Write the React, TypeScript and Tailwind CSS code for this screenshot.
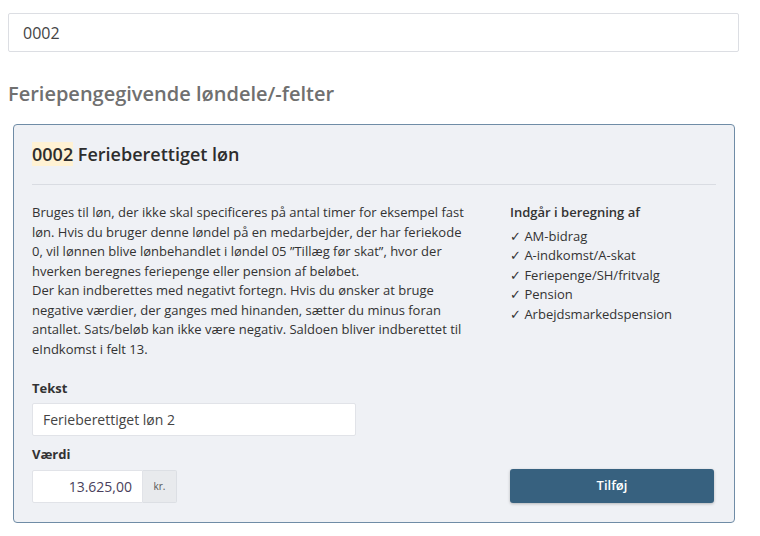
import React from "react"

const checks = [
  "AM-bidrag",
  "A-indkomst/A-skat",
  "Feriepenge/SH/fritvalg",
  "Pension",
  "Arbejdsmarkedspension",
]

export default function App() {
  return (
    <div
      className="h-[536px] w-[760px] bg-white pt-[13px] text-[#333]"
      style={{ fontFamily: '"Open Sans", "Liberation Sans", sans-serif' }}
    >
      <div className="ml-2 flex h-[39px] w-[731px] items-center rounded-[2px] border border-[#dcdee3] px-[14px] text-[16px] text-[#444]">
        0002
      </div>

      <h2 className="ml-2 mt-[28px] text-[20px] font-semibold leading-[28px] text-[#707070]">
        Feriepengegivende løndele/-felter
      </h2>

      <div className="ml-[13px] mt-[16px] h-[399px] w-[722px] rounded-[4px] border border-[#6f8ca6] bg-[#eff1f5] px-[18px] pt-[16px]">
        <div className="text-[18px] font-semibold leading-[26px] text-[#2d2d2d]">
          <span className="bg-[#fff2d4]">0002</span> Ferieberettiget løn
        </div>
        <div className="mt-[17px] h-px bg-[#d9dce2]" />

        <div className="mt-[18px] flex">
          <p className="w-[442px] text-[13px] leading-[19.5px] text-[#333]">
            Bruges til løn, der ikke skal specificeres på antal timer for eksempel fast
            løn. Hvis du bruger denne løndel på en medarbejder, der har feriekode 0, vil
            lønnen blive lønbehandlet i løndel 05 ”Tillæg før skat”, hvor der hverken
            beregnes feriepenge eller pension af beløbet.
            <br />
            Der kan indberettes med negativt fortegn. Hvis du ønsker at bruge negative
            værdier, der ganges med hinanden, sætter du minus foran antallet. Sats/beløb
            kan ikke være negativ. Saldoen bliver indberettet til eIndkomst i felt 13.
          </p>
          <div className="ml-[36px] w-[204px] text-[13px] leading-[19.5px]">
            <div className="mb-[4px] font-semibold text-[#333]">Indgår i beregning af</div>
            {checks.map((c) => (
              <div key={c}>✓ {c}</div>
            ))}
          </div>
        </div>

        <div className="mt-[19px] flex items-end">
          <div className="w-[478px]">
            <label className="block text-[13px] font-bold leading-[20px]">Tekst</label>
            <div className="mt-[5px] flex h-[33px] w-[324px] items-center rounded-[2px] border border-[#e1e3e8] bg-white px-[10px] text-[14px] text-[#444]">
              Ferieberettiget løn 2
            </div>
            <label className="mt-[8px] block text-[13px] font-bold leading-[20px]">Værdi</label>
            <div className="mt-[6px] flex h-[33px] w-[145px]">
              <div className="flex w-[111px] items-center justify-end rounded-l-[2px] border border-[#e1e3e8] bg-white px-[10px] text-[14px] text-[#4a3f5c]">
                13.625,00
              </div>
              <div className="flex w-[34px] items-center justify-center rounded-r-[2px] border border-l-0 border-[#dcdfe4] bg-[#e8eaed] text-[10px] text-[#555]">
                kr.
              </div>
            </div>
          </div>
          <button className="h-[34px] w-[204px] rounded-[3px] bg-[#37617f] text-[13px] font-semibold text-white shadow-[0_1px_3px_rgba(0,0,0,0.25)]">
            Tilføj
          </button>
        </div>
      </div>
    </div>
  )
}
